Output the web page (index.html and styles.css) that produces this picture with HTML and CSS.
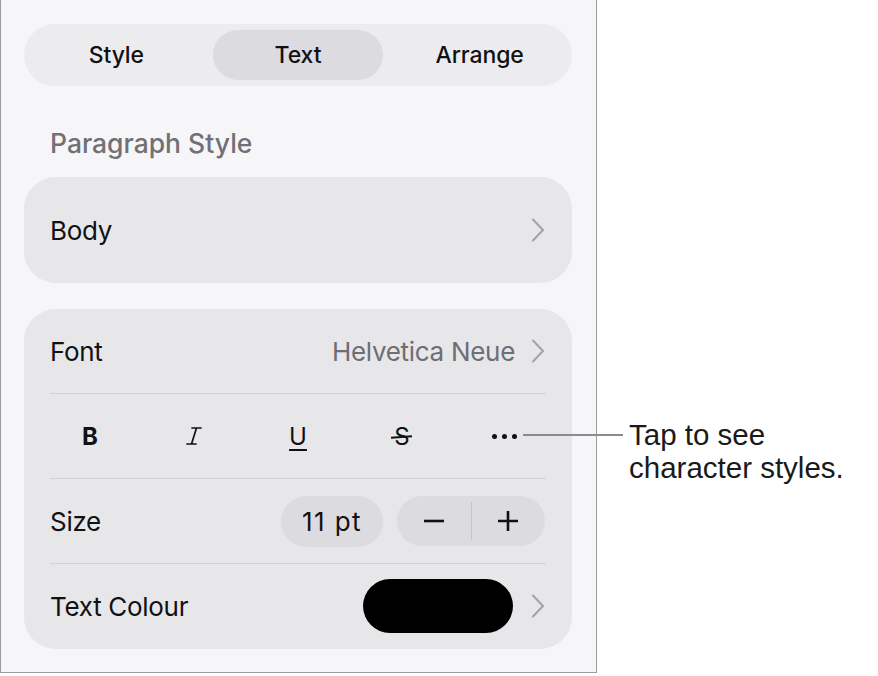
FILE: index.html
```html
<!DOCTYPE html>
<html lang="en">
<head>
<meta charset="utf-8">
<title>Text format panel</title>
<link rel="stylesheet" href="styles.css">
</head>
<body>
<div class="page">
  <div class="panel">
    <div class="seg">
      <div class="seg-item">Style</div>
      <div class="seg-item active">Text</div>
      <div class="seg-item">Arrange</div>
    </div>

    <div class="section-label">Paragraph Style</div>

    <div class="card card-single">
      <span class="label">Body</span>
      <svg class="chev" viewBox="0 0 16 24" width="16" height="24"><path d="M3 1.5 L13 12 L3 22.5" /></svg>
    </div>

    <div class="card card-list">
      <div class="row">
        <span class="label">Font</span>
        <span class="value">Helvetica Neue</span>
        <svg class="chev" viewBox="0 0 16 24" width="16" height="24"><path d="M3 1.5 L13 12 L3 22.5" /></svg>
      </div>
      <div class="row row-styles">
        <div class="styles">
          <div class="sbtn"><span class="bold">B</span></div>
          <div class="sbtn">
            <svg viewBox="0 0 16 18" width="16" height="18" class="ital"><path d="M6 1 H15 M1 17 H10 M10.5 1 L5.5 17" /></svg>
          </div>
          <div class="sbtn"><span class="under">U</span></div>
          <div class="sbtn"><span class="strike">S</span></div>
          <div class="sbtn"><span class="dots"><i></i><i></i><i></i></span></div>
        </div>
      </div>
      <div class="row">
        <span class="label">Size</span>
        <div class="size-pill">11 pt</div>
        <div class="stepper">
          <div class="step">
            <svg viewBox="0 0 22 22" width="22" height="22"><path d="M1 11 H21" /></svg>
          </div>
          <div class="step-div"></div>
          <div class="step">
            <svg viewBox="0 0 22 22" width="22" height="22"><path d="M1 11 H21 M11 1 V21" /></svg>
          </div>
        </div>
      </div>
      <div class="row">
        <span class="label">Text Colour</span>
        <div class="swatch"></div>
        <svg class="chev" viewBox="0 0 16 24" width="16" height="24"><path d="M3 1.5 L13 12 L3 22.5" /></svg>
      </div>
    </div>
  </div>

  <div class="callout">
    <div class="callout-line"></div>
    <div class="callout-text">Tap to see<br>character styles.</div>
  </div>
</div>
</body>
</html>
```

FILE: styles.css
```css
* { box-sizing: border-box; }

html, body {
  margin: 0;
  padding: 0;
  background: #ffffff;
}

body {
  font-family: Inter, "Noto Sans", "Liberation Sans", sans-serif;
  color: #111113;
}

.page {
  position: relative;
  width: 878px;
  height: 676px;
}

.panel {
  width: 597px;
  height: 673px;
  background: #f6f6f8;
  border: 1px solid #9c9c9c;
  border-top: none;
  padding: 24px 24px 0 23px;
  display: flex;
  flex-direction: column;
}

/* segmented control */
.seg {
  height: 62px;
  border-radius: 31px;
  background: #ececef;
  padding: 6px 7px;
  display: grid;
  grid-template-columns: 1fr 1fr 1fr;
  column-gap: 11px;
}

.seg-item {
  display: flex;
  align-items: center;
  justify-content: center;
  font-size: 23px;
  font-weight: 500;
  color: #111113;
  border-radius: 25px;
  letter-spacing: -0.1px;
}

.seg-item.active {
  background: #dcdce0;
}

.section-label {
  margin-top: 43px;
  padding-left: 26px;
  height: 28px;
  line-height: 28px;
  font-size: 26.5px;
  font-weight: 500;
  color: #707075;
  letter-spacing: 0;
}

.card {
  background: #e7e7ea;
  border-radius: 32px;
}

.card-single {
  margin-top: 20px;
  height: 106px;
  display: flex;
  align-items: center;
  padding: 0 26px;
}

.label {
  flex: 1;
  font-size: 26px;
  color: #111113;
  letter-spacing: -0.3px;
}

.chev {
  display: block;
  flex: none;
}

.chev path {
  fill: none;
  stroke: #a2a2a7;
  stroke-width: 2;
  stroke-linecap: round;
  stroke-linejoin: round;
}

.card-list {
  margin-top: 26px;
  height: 340px;
  display: flex;
  flex-direction: column;
}

.row {
  height: 85px;
  margin: 0 26px;
  display: flex;
  align-items: center;
  border-top: 1px solid #d3d3d7;
}

.row:first-child {
  border-top: none;
  height: 84px;
}

.value {
  font-size: 26px;
  color: #6e6e73;
  margin-right: 15px;
  letter-spacing: -0.3px;
}

/* B I U S ... */
.row-styles {
  justify-content: center;
}

.styles {
  display: grid;
  grid-template-columns: repeat(5, 104px);
  flex: none;
  margin: 0 -12px;
}

.sbtn {
  height: 40px;
  display: flex;
  align-items: center;
  justify-content: center;
  font-size: 24px;
  color: #111113;
}

.bold {
  font-weight: 700;
}

.ital path {
  fill: none;
  stroke: #111113;
  stroke-width: 1.7;
  stroke-linecap: round;
}

.under {
  text-decoration: underline;
  text-decoration-thickness: 2px;
  text-underline-offset: 4px;
}

.strike {
  position: relative;
}

.strike::after {
  content: "";
  position: absolute;
  left: -3px;
  right: -3px;
  top: 50%;
  height: 2px;
  background: #111113;
  transform: rotate(-4deg);
}

.dots {
  display: flex;
  gap: 5px;
  margin-left: -4px;
}

.dots i {
  display: block;
  width: 5px;
  height: 5px;
  border-radius: 50%;
  background: #111113;
}

/* size */
.size-pill {
  width: 102px;
  height: 51px;
  border-radius: 26px;
  background: #dcdce0;
  display: flex;
  align-items: center;
  justify-content: center;
  font-size: 26px;
  letter-spacing: 1.4px;
  margin-right: 14px;
}

.stepper {
  width: 148px;
  height: 50px;
  border-radius: 25px;
  background: #dcdce0;
  display: flex;
  align-items: center;
  margin-right: 1px;
}

.step {
  flex: 1;
  display: flex;
  align-items: center;
  justify-content: center;
}

.step svg path {
  fill: none;
  stroke: #111113;
  stroke-width: 2.6;
  stroke-linecap: butt;
}

.step-div {
  width: 1px;
  height: 38px;
  background: #c4c4c9;
}

.swatch {
  width: 150px;
  height: 54px;
  border-radius: 27px;
  background: #000000;
  margin-right: 17px;
}

/* annotation callout */
.callout {
  position: absolute;
  left: 523px;
  top: 418px;
  display: flex;
  align-items: flex-start;
}

.callout-line {
  width: 100px;
  height: 2px;
  margin-top: 16px;
  background: #8c8c8c;
}

.callout-text {
  margin-left: 6px;
  font-family: "Liberation Sans", Arial, sans-serif;
  font-size: 29.5px;
  line-height: 33px;
  color: #1a1a1a;
}
```
